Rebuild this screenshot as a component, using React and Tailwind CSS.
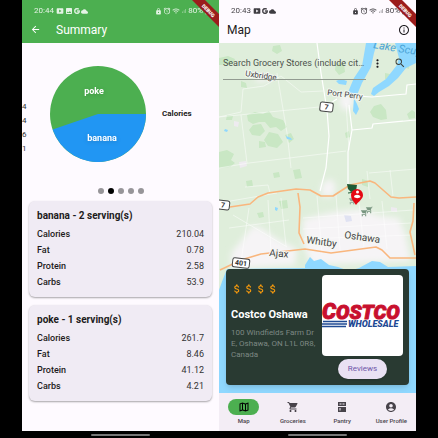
import React from "react";
import {
  MdArrowBack,
  MdInfoOutline,
  MdSearch,
  MdMoreVert,
  MdAttachMoney,
  MdOutlineMap,
  MdShoppingCart,
  MdAccountCircle,
  MdBatteryFull,
  MdAlarm,
  MdWifi,
  MdSignalCellularAlt,
  MdSmartDisplay,
  MdImage,
  MdCloud,
  MdLock,
} from "react-icons/md";
import { FaGoogle } from "react-icons/fa";

const foods = [
  {
    title: "banana - 2 serving(s)",
    rows: [["Calories", "210.04"], ["Fat", "0.78"], ["Protein", "2.58"], ["Carbs", "53.9"]],
  },
  {
    title: "poke - 1 serving(s)",
    rows: [["Calories", "261.7"], ["Fat", "8.46"], ["Protein", "41.12"], ["Carbs", "4.21"]],
  },
];

function DebugRibbon() {
  return (
    <svg className="absolute top-0 right-0 z-10 h-7 w-7" viewBox="0 0 28 28">
      <path d="M1 0H14L28 14V27Z" fill="#9b1c1c" />
      <text
        x="17.5"
        y="12.5"
        transform="rotate(45 17.5 10.5)"
        textAnchor="middle"
        fontSize="5"
        fontWeight="900"
        fill="#fff"
      >
        DEBUG
      </text>
    </svg>
  );
}

function StatusBar({ time, photo }) {
  return (
    <div className="flex h-4 items-end pr-2 pl-3 text-[8px] leading-[10px] opacity-85">
      <span className="pr-[2px]">{time}</span>
      <span className="flex h-[10px] items-center gap-px">
        <MdSmartDisplay size={8} />
        {photo && <MdImage size={8} />}
        <FaGoogle size={6} stroke="currentColor" strokeWidth={30} />
        <MdCloud size={7} />
      </span>
      <span className="ml-auto flex h-[10px] items-center gap-px">
        <MdLock size={7} />
        <MdAlarm size={8} stroke="currentColor" />
        <MdWifi size={8} className="opacity-80" />
        <MdSignalCellularAlt size={6} className="opacity-50" />
        <span>80%</span>
      </span>
      <MdBatteryFull size={8} className="mb-px" />
    </div>
  );
}

function HomeHandle() {
  return (
    <div className="flex h-[7px] shrink-0 items-center justify-center bg-black">
      <div className="h-[2px] w-[59px] rounded-full bg-[#777]" />
    </div>
  );
}

function FoodCard({ title, rows }) {
  return (
    <section className="h-24 rounded-md bg-[#f0ebf4] px-2 pt-[6px] shadow-[0_1px_2px_rgba(0,0,0,0.35)]">
      <h2 className="mb-[2px] text-[10px] leading-[17px] font-bold">{title}</h2>
      <dl>
        {rows.map(([name, value]) => (
          <div key={name} className="flex h-4 items-center justify-between text-[9px] leading-4">
            <dt className="font-medium">{name}</dt>
            <dd className="text-[#333]">{value}</dd>
          </div>
        ))}
      </dl>
    </section>
  );
}

function SummaryScreen() {
  return (
    <section className="relative flex min-w-0 flex-1 flex-col overflow-hidden bg-[#fefaff]">
      <header className="h-[43px] shrink-0 bg-[#4caf50] text-white">
        <StatusBar time="20:44" photo />
        <div className="flex h-[27px] items-center pl-2">
          <button aria-label="Back" className="mr-[15px]">
            <MdArrowBack size={11} />
          </button>
          <h1 className="text-[12px] leading-4">Summary</h1>
        </div>
      </header>
      <DebugRibbon />
      <div className="flex h-[142px] shrink-0 items-center">
        <div className="w-[28px] text-[8px] leading-[14px] text-[#333]">
          <div className="mt-[27px]">4</div>
          <div>4</div>
          <div>6</div>
          <div>1</div>
        </div>
        <svg className="h-24 w-24 shrink-0" viewBox="-48 -48 96 96" role="img" aria-label="Calories by food">
          <circle r="48" fill="#4caf50" />
          <path d="M0 0H48A48 48 0 0 1 -45.4 15.6Z" fill="#2196f3" />
          <g className="drop-shadow-sm" fill="#fff" fontSize="9" fontWeight="700" textAnchor="middle">
            <text x="-4" y="-20">poke</text>
            <text x="4" y="27">banana</text>
          </g>
        </svg>
        <span className="ml-4 text-[8px] font-bold">Calories</span>
      </div>
      <div className="flex h-[11px] shrink-0 items-center justify-center gap-1">
        {[0, 1, 2, 3, 4].map((i) => (
          <button
            key={i}
            aria-label={`Chart ${i + 1}`}
            className={i === 1 ? "size-[6px] rounded-full bg-black" : "size-[6px] rounded-full bg-[#979599]"}
          />
        ))}
      </div>
      <div className="flex flex-1 flex-col gap-2 px-[7px] pt-[5px]">
        {foods.map((food) => (
          <FoodCard key={food.title} {...food} />
        ))}
      </div>
      <HomeHandle />
    </section>
  );
}

function Shield({ x, y, w, label }) {
  return (
    <g transform={`translate(${x} ${y}) rotate(7)`}>
      <rect x={-w / 2} y="-4.5" width={w} height="9" rx="2" fill="#fff" stroke="#444" strokeWidth="1" />
      <text y="2.5" textAnchor="middle" fontSize="7" fontWeight="700" fill="#333">{label}</text>
    </g>
  );
}

function CartMark({ x, y, size, color }) {
  return (
    <path
      transform={`translate(${x + size} ${y}) scale(${-size / 24} ${size / 24})`}
      fill={color}
      d="M1 2v2h2l3.6 7.6-1.4 2.5C4.5 15.4 5.5 17 7 17h12v-2H7.4l1.1-2h7.5l5.5-9H5.2l-.9-2zM7 18a2 2 0 1 0 0 4 2 2 0 0 0 0-4zm10 0a2 2 0 1 0 0 4 2 2 0 0 0 0-4z"
    />
  );
}

function MapCanvas() {
  return (
    <svg className="absolute inset-0 h-full w-full" viewBox="0 0 197 350" preserveAspectRatio="xMidYMin slice">
      <defs>
        <filter id="soft" x="-20%" y="-20%" width="140%" height="140%">
          <feGaussianBlur stdDeviation="3" />
        </filter>
        <filter id="leaf" x="-10%" y="-10%" width="120%" height="120%">
          <feGaussianBlur stdDeviation=".6" />
        </filter>
      </defs>
      <rect width="197" height="350" fill="#dfeedb" />
      <g fill="#c9e7c4" filter="url(#leaf)">
        <path d="M28 72l8-3 8 2 6-3 4 6 10 3 4 7-6 4-5-4-6 1-5-6-6 0-6 2-5-3zM34 82l8-1 4 7-5 5-8-1-3-5zM50 89l9 2 5 8-6 6-9-2-4-6zM66 92l6-2 3 6-5 4zM40 98l6 1 1 5-7 1z" />
        <path d="M0 109l8-2 7 4-3 6 4 3-5 4-11 1zM8 72l6 1-1 4-6 0z" />
        <path d="M155 63l7-2 5 6 1 9-6 1-8-3-3-5z" />
        <path d="M54 3l7-1 2 6-5 3-5-3zM0 15l9-2 7 3-2 5-14 1zM22 38l5 2 1 5-6-1zM117 20l8 1 1 8-6 3-4-5z" />
        <path d="M74 127l7-1 2 9-7 1zM54 130l6-1 1 5-6 1zM27 138l6-1 1 6-6 1zM143 136l7 2-1 6-6-2zM188 71l5-4 3 2v6l-6 1zM185 16l6 3-1 7-6-2zM126 90l4-2 1 6-4 1zM60 158l8-1 1 8-7 1zM38 170l6-1 1 5-5 1zM166 30l5 1v6l-5-1z" />
        <path d="M132 178l3 6 0 7 4 9-3 1-4-10-2-10zM46 202l4 2 2 9-3 1-4-7z" />
      </g>
      <g filter="url(#soft)" fill="#f6f4f6">
        <path d="M84 176l30-7 26-3 22 7 18 2 6 15 6 28-100 4-8-22z" />
        <path d="M34 182l10 4 14 10 20 10-2 16-64 4 0-16 10-12z" />
        <path d="M102 144l5-7 7 0 3 9-4 8-10-1z" />
        <path d="M119 56l8-7 9 7-3 9-9 3zM36 32l12 2 3 4-13 1z" />
      </g>
      <g fill="#eeebf0">
        <path d="M20 119l7-1 1 5-7 2zM172 164l6 1v4l-6-1zM15 78l5 1-1 5-4-1z" />
        <path d="M125 172l7 1 1 5-6 1z" fill="#e0e2f2" />
      </g>
      <g fill="none" stroke="#fff" strokeOpacity=".6" strokeWidth=".8">
        <path d="M0 74L22 69 24 46 45 43 62 33 82 49 104 48M22 72L28 120M58 30l10 60 4 35M0 74l60-6 40-4M0 125l30-5 97-12M127 60l3 47M26 144l23-2 2 8M0 160l58-10M84 175l110-8M84 186l108-6M85 196l108-4M98 153l5 58M117 152l4 55M140 160l5 44M163 158l5 48M148 128l3 28M171 127l3 26M150 130l47-4M14 172l54 32M10 185l60-8M30 165l-8 54M49 157l3 52M62 155l5 48" />
        <path d="M98 0l4 30 6 37 2 26-3 32-6 23M102 66l16-10M137 53l16 1 34-3 1-9 9-1M130 62l3 25-4 22 0 33M133 87l20-2 1-4 43-4" strokeOpacity="1" strokeWidth="1.2" />
      </g>
      <g fill="#8fd8ff">
        <path d="M147 0h11l-3 10-3 14-9 16-5 12-4 1-5-1 1-5 2-5 3-7 8-12zM117 38l5-2 6 2-1 4-7-1z" />
        <path d="M135 55l3 6 2 5-3 6-3-4z" />
        <path d="M176 0h21v20l-10 5-8 10-9 8-10 6-5 4-3-2 2-6 13-9 11-14 2-7z" />
        <path d="M67 93l5 2 1 2-5-1zM56 164l3 1-1 3-2-1zM6 86l3 1-1 2-3-1z" />
        <path d="M0 247l4-11 4-10 78-1 0-3 5-8 4 4 7-2 8 6 9 2 11 4 10-3 13-7 8 1 8 5 28-1v130H0z" />
      </g>
      <g fill="none" stroke="#f9b67d" strokeWidth="1.6" strokeLinejoin="round">
        <path d="M11 164l20-3 8-7 10-4 28-4 14 1 11 6h12l17-11 20-4 5 2 16 14 8 1 17-1" />
        <path d="M79 150l2 14-1 26 5 11M195 160l-1 18-3 11 5 23" />
        <path d="M1 227l21-10 20-6 44-5 26 4 45-6 6 3 8 8h26" />
      </g>
      <text x="154" y="5" transform="rotate(9 154 5)" fontSize="11" fontStyle="italic" fill="#4aa3d6">Lake Scugog</text>
      <g fill="#444" fontSize="10" stroke="#f5f8f3" strokeWidth="2" paintOrder="stroke" strokeLinejoin="round">
        <text x="26" y="33" transform="rotate(8 26 33)" fontSize="8">Uxbridge</text>
        <text x="108" y="52" transform="rotate(7 108 52)" fontSize="8">Port Perry</text>
        <text x="87" y="200" transform="rotate(8 87 200)">Whitby</text>
        <text x="125" y="195" transform="rotate(8 125 195)">Oshawa</text>
        <text x="50" y="213" transform="rotate(5 50 213)">Ajax</text>
      </g>
      <Shield x={107.5} y={64} w={13} label="7" />
      <Shield x={4} y={162} w={13} label="7" />
      <Shield x={22} y={220} w={17} label="401" />
      <path d="M128 141l10 1-1 6-5 1-3-3z" fill="#1d5a34" />
      <path d="M129 150l8-1" stroke="#1d5a34" strokeWidth="1" />
      <CartMark x={129} y={154} size={8} color="#8fa696" />
      <CartMark x={141} y={166} size={8} color="#789680" />
      <CartMark x={146} y={163} size={8} color="#789680" />
      <path d="M137 162c-3-4-5-6-5-10a6 6 0 0 1 12 0c0 4-4 6-7 10z" fill="#e50914" />
      <circle cx="138.500" cy="149" r="1.500" fill="#fff" />
      <path d="M135 154c0-3 6-3 6.500 0-1.500 1.500-5 1.500-6.500 0z" fill="#fff" />
    </svg>
  );
}

function CostcoLogo() {
  return (
    <svg className="h-full w-full" viewBox="0 0 81 81" role="img" aria-label="Costco Wholesale">
      <g fontWeight="900" fontStyle="italic" strokeLinejoin="round">
        <text x="0" y="44" fontSize="20" fill="#c8102e" stroke="#c8102e" strokeWidth="1">
          <tspan fontSize="22">C</tspan>OSTCO
        </text>
        <text x="26" y="52" fontSize="9" fill="#1f4a94">WHOLESALE</text>
      </g>
      <path d="M1 46.500h24M0 49h25M0 51.500h24" stroke="#1f4a94" strokeWidth="1.400" />
    </svg>
  );
}

function PantryIcon() {
  return (
    <svg width="12" height="12" viewBox="0 0 24 24" fill="currentColor">
      <path d="M4 2h16v8H4zM4 12h16v10H4z" />
      <path d="M7 5h4v2H7zM13 5h4v2h-4zM7 14h2v5H7z" fill="#f3edf5" />
    </svg>
  );
}

const tabs = [
  { label: "Map", icon: <MdOutlineMap size={12} stroke="currentColor" />, active: true },
  { label: "Groceries", icon: <MdShoppingCart size={12} /> },
  { label: "Pantry", icon: <PantryIcon /> },
  { label: "User Profile", icon: <MdAccountCircle size={12} /> },
];

function StoreCard() {
  return (
    <article className="absolute inset-x-[7px] bottom-2 flex h-[116px] rounded-[4px] bg-[#293a32] pt-[6px] pr-[6px] pl-[5px] shadow-md">
      <div className="min-w-0 flex-1">
        <div className="flex h-7 items-center text-[#f99b0c]">
          {[0, 1, 2, 3].map((i) => (
            <MdAttachMoney key={i} size={12} />
          ))}
        </div>
        <h2 className="pt-1 text-[11px] leading-4 font-bold whitespace-nowrap text-white">Costco Oshawa</h2>
        <p className="pt-1 text-[8px] leading-[11px] whitespace-nowrap text-[#7d8883]">
          100 Windfields Farm Dr
          <br />
          E, Oshawa, ON L1L 0R8,
          <br />
          Canada
        </p>
      </div>
      <div className="flex w-[81px] shrink-0 flex-col items-center">
        <div className="h-[81px] w-full overflow-hidden rounded-[4px] bg-white">
          <CostcoLogo />
        </div>
        <button className="mt-[3px] h-5 w-[49px] rounded-full bg-[#e9e1f3] text-[8px] text-[#6f56a8] shadow">
          Reviews
        </button>
      </div>
    </article>
  );
}

function MapScreen() {
  return (
    <section className="relative flex min-w-0 flex-1 flex-col overflow-hidden bg-[#fefaff]">
      <header className="h-[43px] shrink-0">
        <StatusBar time="20:43" />
        <div className="flex h-[27px] items-center justify-between pr-[6px] pl-2">
          <h1 className="text-[12px] leading-4">Map</h1>
          <button aria-label="Information">
            <MdInfoOutline size={12} />
          </button>
        </div>
      </header>
      <DebugRibbon />
      <div className="relative flex-1 overflow-hidden">
        <MapCanvas />
        <form className="relative flex pt-1 pr-[10px] pl-1" onSubmit={(e) => e.preventDefault()}>
          <input
            aria-label="Search grocery stores"
            placeholder="Search Grocery Stores (include cit…"
            className="h-[33px] min-w-0 flex-1 border-b border-[#929b91] text-[9px] text-[#333] outline-none placeholder:text-[#4c524c]"
          />
          <button type="button" aria-label="More options" className="ml-[5px] h-8">
            <MdMoreVert size={13} />
          </button>
          <button aria-label="Search" className="ml-[10px] h-8 text-[#3d423d]">
            <MdSearch size={12} />
          </button>
        </form>
        <StoreCard />
      </div>
      <nav className="grid h-[38px] shrink-0 grid-cols-4 bg-[#f3edf5] pt-[6px] text-[#47434a]">
        {tabs.map((tab) => (
          <a
            key={tab.label}
            href="#"
            className="flex flex-col items-center gap-[2px] text-[6px] leading-[7px] font-medium whitespace-nowrap"
          >
            <span
              className={
                tab.active
                  ? "flex h-4 w-[31px] items-center justify-center rounded-full bg-[#4caf50] text-black"
                  : "flex h-4 w-[31px] items-center justify-center"
              }
            >
              {tab.icon}
            </span>
            {tab.label}
          </a>
        ))}
      </nav>
      <HomeHandle />
    </section>
  );
}

export default function App() {
  return (
    <main className="flex min-h-screen bg-black px-[22px] font-[Roboto,sans-serif] text-[#1d1b20]">
      <SummaryScreen />
      <MapScreen />
    </main>
  );
}
